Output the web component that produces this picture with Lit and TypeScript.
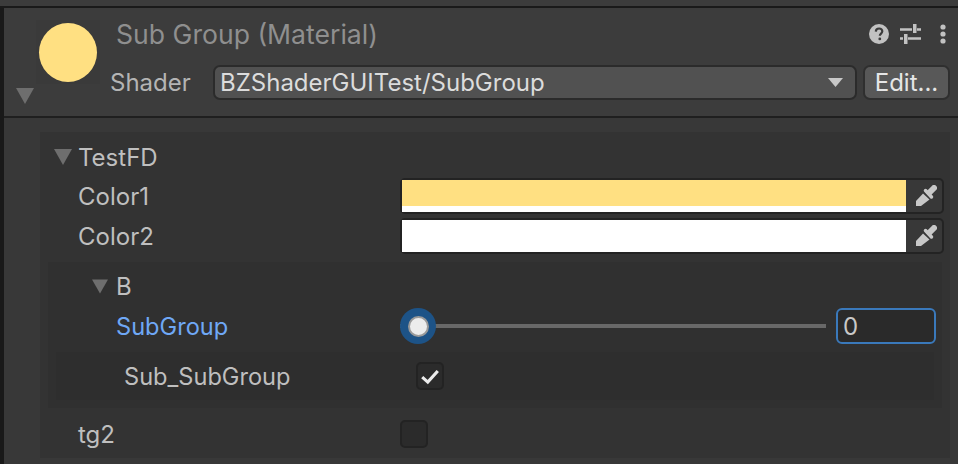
import { LitElement, html, css } from "lit";
import { customElement } from "lit/decorators.js";

const tri = (cls: string) => html`<svg class=${cls} viewBox="0 0 18 16"><path d="M0 0H18L9 16Z" fill="#6e6e6e"/></svg>`;
const dropper = html`<svg class="dropper" viewBox="0 0 21 21"><path d="M13.500 7.500L18 3" stroke="#c8c8c8" stroke-width="6" stroke-linecap="round" fill="none"/><path d="M9.500 5.500L15.500 12" stroke="#c8c8c8" stroke-width="3.500" stroke-linecap="round" fill="none"/><path d="M7 8.500L13.500 14.500 5 21 0 21 0 16Z" fill="#c8c8c8"/></svg>`;

@customElement("app-root")
export class AppRoot extends LitElement {
  static styles = css`
    :host { display: block; width: 958px; height: 464px; overflow: hidden; background: #383838; font-family: Inter, "Noto Sans", sans-serif; font-size: 24px; color: #bfbfbf; }
    * { box-sizing: border-box; }
    .root { display: flex; height: 464px; }
    .strip { width: 4px; flex: none; background: #191919; }
    .main { flex: 1; min-width: 0; display: flex; flex-direction: column; }
    .top { height: 8px; flex: none; background: #3c3c3c; border-bottom: 2px solid #1a1a1a; margin-left: -4px; }
    .header { height: 110px; flex: none; background: #3c3c3c; border-bottom: 2px solid #1f1f1f; display: grid; grid-template-columns: 32px 64px 1fr; }
    .fold { align-self: start; width: 18px; height: 16px; margin: 80px 0 0 12px; display: block; }
    .preview { width: 64px; height: 64px; margin-top: 12px; background: #3a3a3a; display: flex; align-items: center; justify-content: center; }
    .ball { width: 58px; height: 59px; border-radius: 50%; background: #ffe082; }
    .info { display: flex; flex-direction: column; padding-left: 10px; }
    .titlerow { display: flex; align-items: center; height: 26px; margin-top: 13px; padding-left: 6px; }
    .title { flex: 1; color: #8f8f8f; font-size: 26.6px; white-space: nowrap; }
    .icons { display: flex; align-items: center; gap: 11px; padding-right: 12px; }
    .icons svg { display: block; }
    .kebab { margin-left: 7px; }
    .shaderrow { display: flex; align-items: center; margin-top: 18px; height: 34px; }
    .slabel { width: 103px; color: #b4b4b4; }
    .dd { width: 644px; height: 35px; border: 2px solid #2b2b2b; border-radius: 7px; background: #515151; color: #dcdcdc; display: flex; align-items: center; justify-content: space-between; padding: 0 12px 0 5px; }
    .dd svg { width: 15px; height: 9px; display: block; }
    .edit { width: 87px; height: 35px; margin-left: 6px; border: 2px solid #2f2f2f; border-radius: 7px; background: #585858; color: #e6e6e6; display: flex; align-items: center; justify-content: center; }
    .body { flex: 1; min-height: 0; padding: 14px 8px 0 36px; }
    .panel { height: 326px; background: #333333; padding-top: 6px; }
    .row { display: grid; grid-template-columns: 360px 1fr; align-items: center; height: 40px; padding-right: 6px; }
    .row .lbl { padding-left: 38px; white-space: nowrap; }
    .head { display: flex; align-items: center; height: 38px; padding-left: 14px; gap: 6px; }
    .head svg { width: 18px; height: 16px; display: block; }
    .cf { height: 36px; border: 2px solid #232323; border-radius: 5px; background: #383838; display: flex; }
    .swatch { width: 504px; height: 100%; background: #fff; flex: none; }
    .swatch.y { background: linear-gradient(#ffe082 0 26px, #fff 26px); }
    .dropper { width: 21px; height: 21px; margin: 5px 0 0 10px; display: block; flex: none; }
    .group { margin: 6px 8px 0 8px; height: 146px; background: #303030; }
    .ghead { display: flex; align-items: center; height: 46px; padding: 2px 0 0 44px; gap: 8px; }
    .ghead svg { width: 16px; height: 15px; display: block; }
    .srow { display: grid; grid-template-columns: 352px 1fr 100px; align-items: center; height: 36px; padding-right: 6px; }
    .srow .lbl { padding-left: 68px; color: #6fa8f6; font-size: 23.6px; }
    .slider { position: relative; height: 36px; display: flex; align-items: center; margin-right: 10px; }
    .track { flex: 1; height: 4px; background: #686868; }
    .thumb { position: absolute; left: 0; top: 0; width: 36px; height: 36px; border-radius: 50%; background: #1d5387; display: flex; align-items: center; justify-content: center; }
    .thumb i { width: 21px; height: 21px; border-radius: 50%; background: #ececec; border: 2px solid #9a9a9a; display: block; }
    .input { height: 36px; border: 2px solid #3a79bb; border-radius: 6px; background: #2a2a2a; color: #c8c8c8; display: flex; align-items: center; padding-left: 5px; }
    .sub { margin: 8px 8px 0 8px; height: 48px; background: #2e2e2e; display: grid; grid-template-columns: 360px 1fr; align-items: center; }
    .sub .lbl { padding-left: 68px; font-size: 23.6px; }
    .check { width: 28px; height: 28px; border: 2px solid #232323; border-radius: 5px; background: #2b2b2b; display: flex; align-items: center; justify-content: center; }
    .check svg { width: 20px; height: 17px; display: block; }
    .tg { margin-top: 4px; height: 44px; }
  `;

  render() {
    return html`<div class="root">
      <div class="strip"></div>
      <div class="main">
        <div class="top"></div>
        <div class="header">
          ${tri("fold")}
          <div class="preview"><div class="ball"></div></div>
          <div class="info">
            <div class="titlerow">
              <div class="title">Sub Group (Material)</div>
              <div class="icons">
                <svg width="20" height="20" viewBox="0 0 20 20"><circle cx="10" cy="10" r="10" fill="#c2c2c2"/><path d="M6.800 7.600c.1-2 1.500-3.100 3.300-3.100 1.900 0 3.200 1.100 3.200 2.800 0 2.300-2.500 2.300-2.500 4.500" fill="none" stroke="#3c3c3c" stroke-width="2.200"/><circle cx="10.800" cy="14.900" r="1.400" fill="#3c3c3c"/></svg>
                <svg width="22" height="20" viewBox="0 0 22 20"><path d="M0 5.500H12M17 5.500H21M0 14.500H3M8 14.500H21" stroke="#c2c2c2" stroke-width="2.400" fill="none"/><path d="M13 0h3.500v9H13zM4 10h3.500v10H4z" fill="#c2c2c2"/></svg>
                <svg class="kebab" width="6" height="20" viewBox="0 0 6 20"><circle cx="3" cy="3" r="2.600" fill="#c2c2c2"/><circle cx="3" cy="10" r="2.600" fill="#c2c2c2"/><circle cx="3" cy="17" r="2.600" fill="#c2c2c2"/></svg>
              </div>
            </div>
            <div class="shaderrow">
              <div class="slabel">Shader</div>
              <div class="dd"><span>BZShaderGUITest/SubGroup</span><svg viewBox="0 0 15 9"><path d="M0 0H15L7.500 9Z" fill="#c8c8c8"/></svg></div>
              <div class="edit">Edit...</div>
            </div>
          </div>
        </div>
        <div class="body">
          <div class="panel">
            <div class="head">${tri("")}<span>TestFD</span></div>
            <div class="row"><div class="lbl">Color1</div><div class="cf"><div class="swatch y"></div>${dropper}</div></div>
            <div class="row"><div class="lbl">Color2</div><div class="cf"><div class="swatch"></div>${dropper}</div></div>
            <div class="group">
              <div class="ghead">${tri("")}<span>B</span></div>
              <div class="srow">
                <div class="lbl">SubGroup</div>
                <div class="slider"><div class="track"></div><div class="thumb"><i></i></div></div>
                <div class="input">0</div>
              </div>
              <div class="sub"><div class="lbl">Sub_SubGroup</div><div class="check"><svg viewBox="0 0 18 15"><path d="M2 8l5 4.500L16 2.500" fill="none" stroke="#ececec" stroke-width="2.800"/></svg></div></div>
            </div>
            <div class="row tg"><div class="lbl">tg2</div><div class="check"></div></div>
          </div>
        </div>
      </div>
    </div>`;
  }
}
